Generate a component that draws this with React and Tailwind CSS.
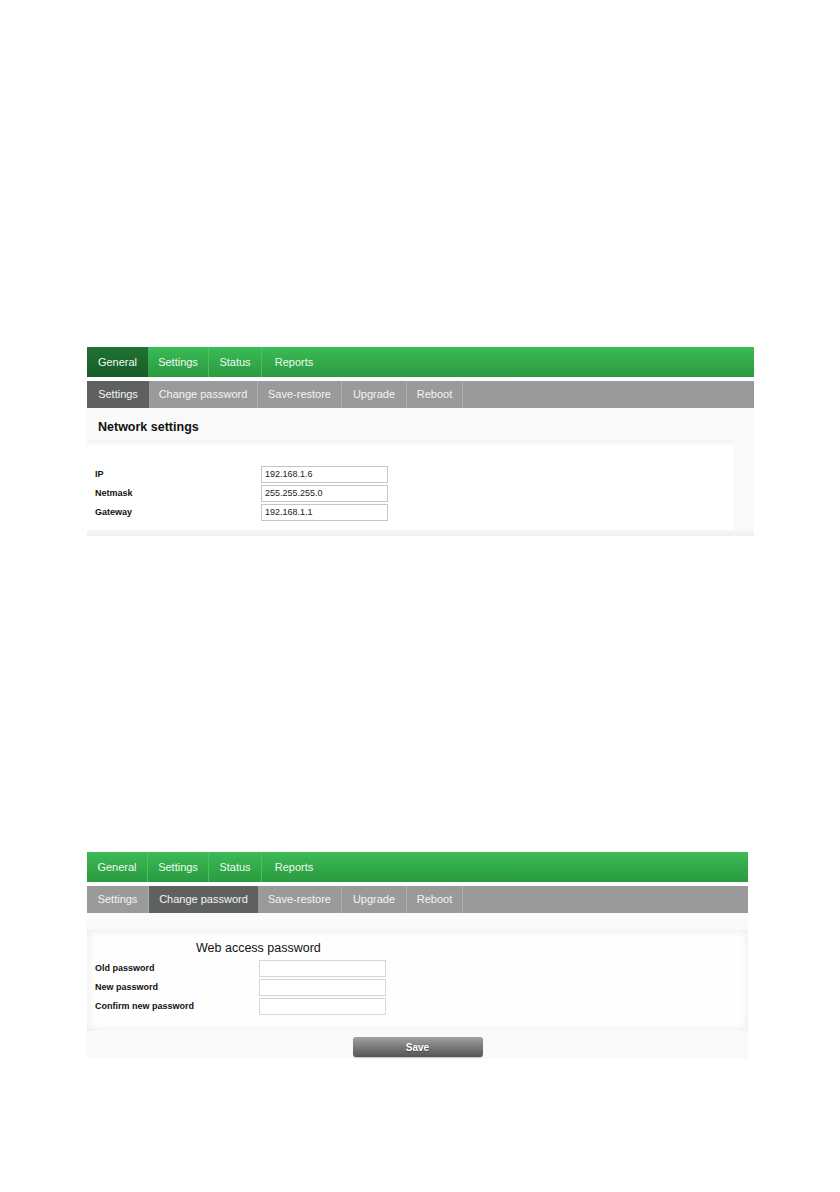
const mainTabs = [
  ["General", "w-[61px]"],
  ["Settings", "w-[61px]"],
  ["Status", "w-[53px]"],
  ["Reports", "w-[64px]"],
];
const subTabs = [
  ["Settings", "w-[62px]"],
  ["Change password", "w-[109px]"],
  ["Save-restore", "w-[84px]"],
  ["Upgrade", "w-[65px]"],
  ["Reboot", "w-[56px]"],
];

function TopBars({ activeMain, activeSub }) {
  return (
    <div>
      <div className="flex h-[30px] bg-gradient-to-b from-[#3bbb56] to-[#2a9a40]">
        {mainTabs.map(([t, w], i) => (
          <div
            key={t}
            className={
              "flex items-center justify-center text-[11px] text-[#effaf0] " +
              w +
              " " +
              (i === activeMain
                ? "bg-gradient-to-b from-[#1f7233] to-[#185c28]"
                : i < mainTabs.length - 1
                ? "border-r border-[#49c262]"
                : "")
            }
          >
            {t}
          </div>
        ))}
      </div>
      <div className="mt-[4px] flex h-[27px] bg-[#9a9a9a]">
        {subTabs.map(([t, w], i) => (
          <div
            key={t}
            className={
              "flex items-center justify-center text-[11px] text-[#f4f4f4] " +
              w +
              " " +
              (i === activeSub ? "bg-[#5f6161]" : "border-r border-[#adadad]")
            }
          >
            {t}
          </div>
        ))}
      </div>
    </div>
  );
}

function Field({ label, value, labelW, border }) {
  return (
    <div className="flex items-start">
      <div style={{ width: labelW }} className="pt-[1px] text-[9px] font-bold leading-[14px] text-[#111]">
        {label}
      </div>
      <div className={"flex h-[17px] w-[127px] items-center border bg-white px-[3px] text-[9px] text-[#222] " + border}>
        {value}
      </div>
    </div>
  );
}

export default function App() {
  return (
    <div className="min-h-[1192px] bg-white pt-[347px] font-['Liberation_Sans',Arial,sans-serif]">
      {/* Network settings */}
      <div className="ml-[87px] w-[667px]">
        <TopBars activeMain={0} activeSub={0} />
        <div className="bg-[#f9f9f9]">
          <div className="h-[32px] pl-[11px] pt-[11px] text-[12.5px] font-bold leading-[16px] text-[#111]">
            Network settings
          </div>
          <div className="flex">
            <div className="flex w-[646px] flex-col gap-[2px] bg-gradient-to-b from-[#f2f2f2] via-white via-[8%] to-white pl-[8px] pt-[26px] pb-[9px]">
              <Field label="IP" value="192.168.1.6" labelW={166} border="border-[#c6c6c6]" />
              <Field label="Netmask" value="255.255.255.0" labelW={166} border="border-[#c6c6c6]" />
              <Field label="Gateway" value="192.168.1.1" labelW={166} border="border-[#c6c6c6]" />
            </div>
          </div>
          <div className="h-[6px] bg-gradient-to-b from-[#f7f7f7] to-[#efefef]" />
        </div>
      </div>

      {/* Change password */}
      <div className="ml-[87px] mt-[316px] w-[661px]">
        <TopBars activeMain={-1} activeSub={1} />
        <div className="bg-[#fafafa]">
          <div className="h-[17px]" />
          <div className="flex flex-col bg-[#fefefe] pb-[16px] pl-[8px] pt-[10px] shadow-[inset_0_0_10px_rgba(0,0,0,0.09)]">
            <div className="pl-[101px] text-[12.5px] leading-[16px] text-[#111]">Web access password</div>
            <div className="mt-[4px] flex flex-col gap-[2px]">
              <Field label="Old password" labelW={164} border="border-[#d6d6d6]" />
              <Field label="New password" labelW={164} border="border-[#d6d6d6]" />
              <Field label="Confirm new password" labelW={164} border="border-[#d6d6d6]" />
            </div>
          </div>
          <div className="flex h-[28px] justify-center pt-[6px]">
            <button className="h-[20px] w-[130px] rounded-[3px] bg-gradient-to-b from-[#a2a2a2] to-[#545454] text-[10px] font-bold text-white shadow-[0_1px_1px_rgba(0,0,0,0.2)] [text-shadow:0_1px_1px_rgba(0,0,0,0.4)]">
              Save
            </button>
          </div>
        </div>
      </div>
    </div>
  );
}
